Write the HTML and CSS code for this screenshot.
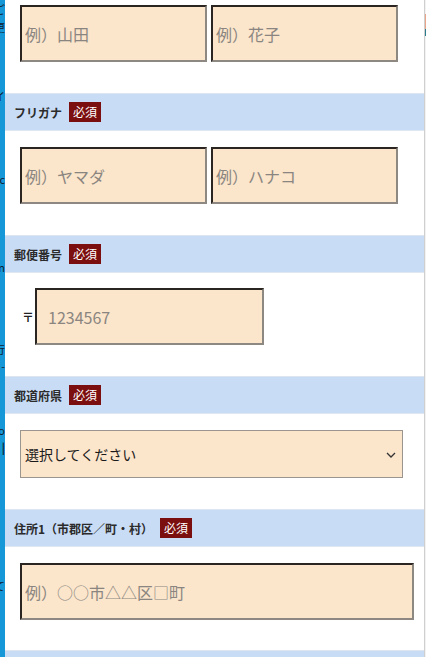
FILE: index.html
```html
<!DOCTYPE html>
<html lang="ja">
<head>
<meta charset="utf-8">
<title>フォーム</title>
<link rel="stylesheet" href="styles.css">
</head>
<body>
<div class="page">
  <div class="backdrop">
    <div class="frag f1"><span>ご</span></div>
    <div class="frag f2"><span>更</span></div>
    <div class="frag f3"><span>イ</span></div>
    <div class="frag f4"><span>ic</span></div>
    <div class="frag f5"><span>n</span></div>
    <div class="frag f6"><span>行</span></div>
    <div class="frag f7"><span>-</span></div>
    <div class="frag f8"><span>o</span></div>
    <div class="frag f9"><span>|</span></div>
    <div class="frag f10"><span>て</span></div>
  </div>
  <main class="panel">
    <div class="field first">
      <div class="pair">
        <input class="box half" type="text" placeholder="例）山田">
        <input class="box half" type="text" placeholder="例）花子">
      </div>
    </div>
    <div class="bar"><span class="label">フリガナ</span><span class="req">必須</span></div>
    <div class="field">
      <div class="pair">
        <input class="box half" type="text" placeholder="例）ヤマダ">
        <input class="box half" type="text" placeholder="例）ハナコ">
      </div>
    </div>
    <div class="bar"><span class="label">郵便番号</span><span class="req">必須</span></div>
    <div class="field zip-field">
      <div class="zip">
        <span class="zip-mark">〒</span>
        <input class="box zip-input" type="text" placeholder="1234567">
      </div>
    </div>
    <div class="bar"><span class="label">都道府県</span><span class="req">必須</span></div>
    <div class="field select-field">
      <div class="select">
        <span>選択してください</span>
        <svg class="chev" width="10" height="6" viewBox="0 0 10 6"><path d="M1 1 L5 5 L9 1" fill="none" stroke="#333" stroke-width="1.3"/></svg>
      </div>
    </div>
    <div class="bar"><span class="label">住所1（市郡区／町・村）</span><span class="req">必須</span></div>
    <div class="field last">
      <input class="box wide" type="text" placeholder="例）○○市△△区□町">
    </div>
    <div class="bar"></div>
  </main>
  <div class="edge"><div class="edge-mark"></div></div>
</div>
</body>
</html>
```

FILE: styles.css
```css
html, body {
  margin: 0;
  padding: 0;
  height: 657px;
  overflow: hidden;
  font-family: "Noto Sans CJK JP", "Noto Sans", sans-serif;
}

.page {
  display: flex;
  height: 657px;
}

.backdrop {
  width: 5px;
  flex: none;
  background: #1697d8;
  overflow: hidden;
  display: flex;
  flex-direction: column;
}

.frag {
  display: flex;
  justify-content: flex-end;
  font-size: 11px;
  line-height: 12px;
  height: 12px;
  color: #10202e;
  white-space: nowrap;
}

.f1 { margin-top: 3px; }
.f2 { margin-top: 6px; }
.f3 { margin-top: 57px; }
.f4 { margin-top: 71px; }
.f5 { margin-top: 76px; }
.f6 { margin-top: 70px; }
.f7 { margin-top: 5px; }
.f8 { margin-top: 52px; }
.f9 { margin-top: 5px; font-weight: bold; }
.f10 { margin-top: 127px; }

.panel {
  flex: 1;
  background: #fff;
  display: flex;
  flex-direction: column;
  min-width: 0;
}

.edge {
  width: 2px;
  flex: none;
  background: #f2f2f2;
  border-left: 1px solid #cfcfcf;
  box-sizing: border-box;
  position: relative;
}

.edge-mark {
  position: absolute;
  top: 14px;
  left: 0;
  width: 2px;
  height: 22px;
  background: linear-gradient(#e8a58a, #e8a58a 70%, #2a7d8c 70%);
}

.field {
  padding: 16px 0 31px 15px;
}

.field.first {
  padding-top: 5px;
}

.field.last {
  padding-bottom: 30px;
}

.zip-field {
  padding-top: 15px;
}

.pair {
  display: flex;
  gap: 4px;
}

.box {
  box-sizing: border-box;
  height: 57px;
  margin: 0;
  background: #fbe5cb;
  border-top: 2px solid #2a2521;
  border-left: 2px solid #2a2521;
  border-right: 2px solid #8d8882;
  border-bottom: 2px solid #8d8882;
  font-family: "Noto Sans CJK JP", "Noto Sans", sans-serif;
  font-size: 16px;
  color: #333;
  padding: 0 0 0 3px;
  outline: none;
}

.box::placeholder {
  color: #8a8580;
}

.half {
  width: 187px;
}

.zip {
  display: flex;
  align-items: center;
  gap: 4px;
  padding-left: 2px;
}

.zip-mark {
  font-size: 12px;
  font-weight: bold;
  color: #222;
  width: 9px;
}

.zip-input {
  width: 229px;
  padding-left: 11px;
}

.wide {
  width: 394px;
}

.select {
  box-sizing: border-box;
  width: 383px;
  height: 48px;
  background: #fbe5cb;
  border: 1px solid #9b958f;
  display: flex;
  align-items: center;
  justify-content: space-between;
  padding: 0 6px 0 4px;
  font-size: 14px;
  color: #1a1a1a;
}

.chev {
  display: block;
  margin-top: 2px;
}

.bar {
  box-sizing: border-box;
  height: 38px;
  flex: none;
  background: #c8dcf6;
  border-top: 1px solid #dde6f0;
  border-bottom: 1px solid #dfe7f1;
  display: flex;
  align-items: center;
  gap: 7px;
  padding-left: 9px;
}

.label {
  font-size: 12px;
  font-weight: bold;
  color: #2b2b2b;
}

.req {
  background: #7b0f0f;
  color: #fff;
  font-size: 12px;
  line-height: 20px;
  height: 20px;
  padding: 0 4px;
}
```
